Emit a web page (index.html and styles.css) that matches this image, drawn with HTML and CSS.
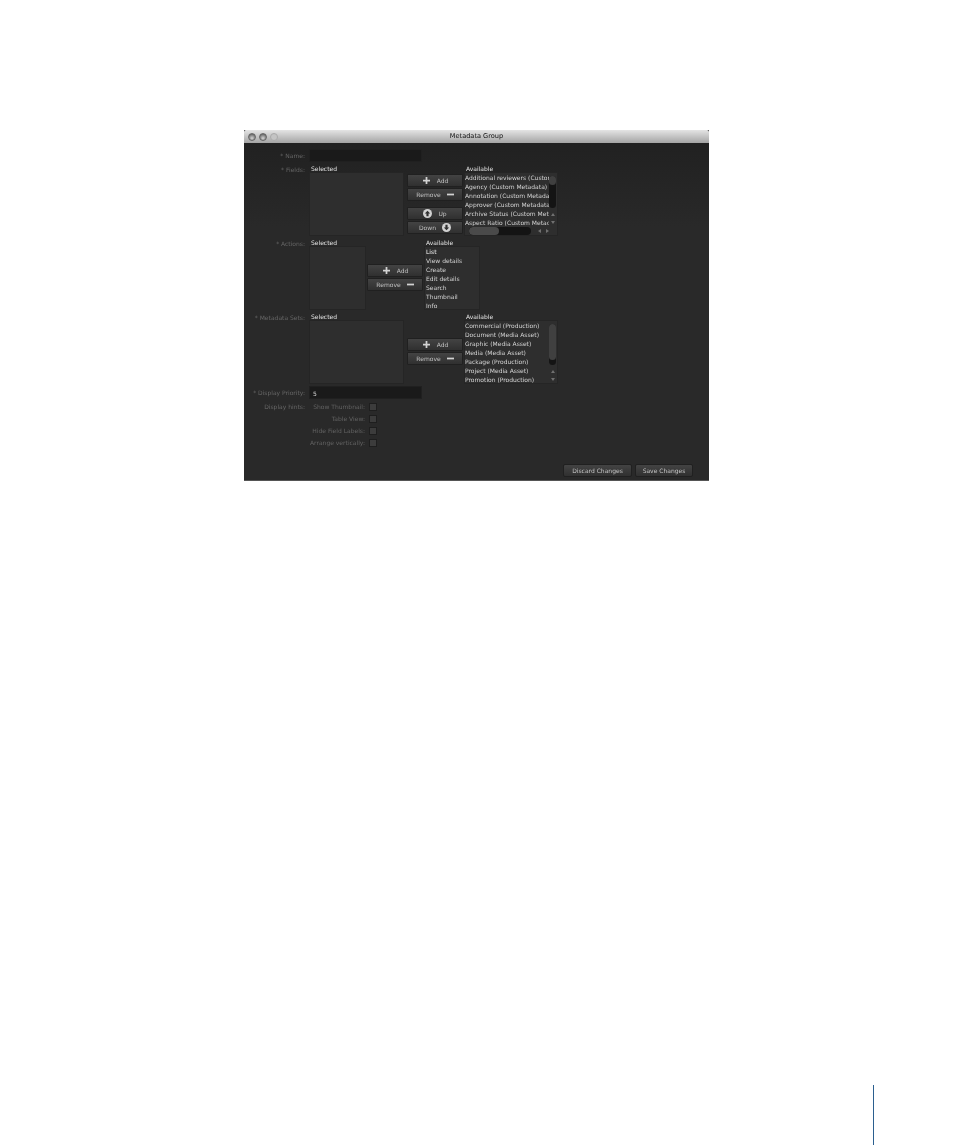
FILE: index.html
```html
<!DOCTYPE html>
<html lang="en">
<head>
<meta charset="utf-8">
<title>Metadata Group</title>
<link rel="stylesheet" href="styles.css">
</head>
<body>
<main class="page">
  <section class="window">
    <header class="titlebar">
      <div class="lights">
        <span class="light"></span><span class="light"></span><span class="light light-off"></span>
      </div>
      <div class="title">Metadata Group</div>
    </header>
    <div class="content">
      <div class="row row-name">
        <div class="label">* Name:</div>
        <div class="input"></div>
      </div>

      <div class="row row-picker">
        <div class="label">* Fields:</div>
        <div class="col col-selected">
          <div class="cap">Selected</div>
          <div class="box box-wide"></div>
        </div>
        <div class="buttons buttons-fields">
          <div class="btn btn-add"><svg class="ico" viewBox="0 0 8 8"><path d="M3 0h2v3h3v2H5v3H3V5H0V3h3z"/></svg><span>Add</span></div>
          <div class="btn"><span>Remove</span><svg class="ico" viewBox="0 0 8 8"><path d="M0 3h8v2H0z"/></svg></div>
          <div class="btn btn-gap"><svg class="ico ico-round" viewBox="0 0 10 10"><circle cx="5" cy="5" r="5"/><path class="arrow" d="M5 2 8 5H6.200V8H3.800V5H2z"/></svg><span>Up</span></div>
          <div class="btn"><span>Down</span><svg class="ico ico-round" viewBox="0 0 10 10"><circle cx="5" cy="5" r="5"/><path class="arrow" d="M5 8 2 5H3.800V2H6.200V5H8z"/></svg></div>
        </div>
        <div class="col col-available">
          <div class="cap">Available</div>
          <div class="box avail">
            <div class="avail-main">
              <div class="items">
                <div>Additional reviewers (Custom Metadata)</div>
                <div>Agency (Custom Metadata)</div>
                <div>Annotation (Custom Metadata)</div>
                <div>Approver (Custom Metadata)</div>
                <div>Archive Status (Custom Metadata)</div>
                <div>Aspect Ratio (Custom Metadata)</div>
              </div>
              <div class="vbar"><div class="track"><div class="thumb thumb-short"></div></div><div class="arrows"><i class="up"></i><i class="down"></i></div></div>
            </div>
            <div class="hbar"><div class="htrack"><div class="hthumb"></div></div><i class="left"></i><i class="right"></i></div>
          </div>
        </div>
      </div>

      <div class="row row-picker">
        <div class="label">* Actions:</div>
        <div class="col col-selected">
          <div class="cap">Selected</div>
          <div class="box box-narrow"></div>
        </div>
        <div class="buttons buttons-two buttons-near">
          <div class="btn btn-add"><svg class="ico" viewBox="0 0 8 8"><path d="M3 0h2v3h3v2H5v3H3V5H0V3h3z"/></svg><span>Add</span></div>
          <div class="btn"><span>Remove</span><svg class="ico" viewBox="0 0 8 8"><path d="M0 3h8v2H0z"/></svg></div>
        </div>
        <div class="col col-actions">
          <div class="cap">Available</div>
          <div class="box items-plain">
            <div class="first">List</div>
            <div>View details</div>
            <div>Create</div>
            <div>Edit details</div>
            <div>Search</div>
            <div>Thumbnail</div>
            <div>Info</div>
          </div>
        </div>
      </div>

      <div class="row row-picker">
        <div class="label">* Metadata Sets:</div>
        <div class="col col-selected">
          <div class="cap">Selected</div>
          <div class="box box-wide"></div>
        </div>
        <div class="buttons buttons-two">
          <div class="btn btn-add"><svg class="ico" viewBox="0 0 8 8"><path d="M3 0h2v3h3v2H5v3H3V5H0V3h3z"/></svg><span>Add</span></div>
          <div class="btn"><span>Remove</span><svg class="ico" viewBox="0 0 8 8"><path d="M0 3h8v2H0z"/></svg></div>
        </div>
        <div class="col col-available">
          <div class="cap">Available</div>
          <div class="box avail avail-sets">
            <div class="items">
              <div>Commercial (Production)</div>
              <div>Document (Media Asset)</div>
              <div>Graphic (Media Asset)</div>
              <div>Media (Media Asset)</div>
              <div>Package (Production)</div>
              <div>Project (Media Asset)</div>
              <div>Promotion (Production)</div>
            </div>
            <div class="vbar"><div class="track track-sets"><div class="thumb thumb-long"></div></div><div class="arrows"><i class="up"></i><i class="down"></i></div></div>
          </div>
        </div>
      </div>

      <div class="row row-priority">
        <div class="label">* Display Priority:</div>
        <div class="input input-value">5</div>
      </div>

      <div class="row row-hints">
        <div class="label">Display hints:</div>
        <div class="hints">
          <div class="hint"><span>Show Thumbnail:</span><i class="check"></i></div>
          <div class="hint"><span>Table View:</span><i class="check"></i></div>
          <div class="hint"><span>Hide Field Labels:</span><i class="check"></i></div>
          <div class="hint"><span>Arrange vertically:</span><i class="check"></i></div>
        </div>
      </div>

      <footer class="footer">
        <div class="btn btn-foot btn-discard">Discard Changes</div>
        <div class="btn btn-foot btn-save">Save Changes</div>
      </footer>
    </div>
  </section>
  <div class="page-rule"></div>
</main>
</body>
</html>
```

FILE: styles.css
```css
* { box-sizing: border-box; }

html, body {
  margin: 0;
  padding: 0;
  background: #fff;
}

.page {
  position: relative;
  width: 954px;
  height: 1145px;
  padding: 130px 0 0 244px;
  overflow: hidden;
  font-family: "DejaVu Sans", sans-serif;
  font-size: 6px;
  line-height: 9px;
}

.page-rule {
  position: absolute;
  left: 873px;
  top: 1085px;
  width: 1px;
  height: 60px;
  background: #2b5f8f;
}

.window {
  width: 465px;
  height: 351px;
  background: #272727;
  display: flex;
  flex-direction: column;
  border-bottom: 1px solid #555;
  filter: blur(0.25px);
}

.titlebar {
  height: 13px;
  flex: none;
  display: flex;
  align-items: center;
  position: relative;
  background: linear-gradient(#e4e4e4, #a4a4a4);
  border-radius: 2px 2px 0 0;
}

.lights {
  display: flex;
  gap: 3px;
  padding-left: 4px;
}

.light {
  width: 8px;
  height: 8px;
  border-radius: 50%;
  background: radial-gradient(circle at 50% 70%, #d4d4d4, #6d6d6d 75%);
  border: 1px solid #666;
}

.light-off {
  background: #c4c4c4;
  border-color: #aaa;
}

.title {
  position: absolute;
  left: 0;
  right: 0;
  text-align: center;
  color: #111;
  font-size: 6.6px;
}

.content {
  flex: 1;
  display: flex;
  flex-direction: column;
  padding-top: 6px;
  background: linear-gradient(#212121, #292929 25%);
}

.row { display: flex; }

.label {
  width: 61px;
  flex: none;
  text-align: right;
  color: #666;
  white-space: nowrap;
}

.row-name { height: 13px; align-items: center; margin-bottom: 3px; }
.row-picker { height: 71px; margin-bottom: 3px; }
.row-priority { height: 13px; margin-top: -1px; align-items: center; }
.row-hints { margin-top: 3px; }

.input {
  width: 113px;
  height: 13px;
  margin-left: 4px;
  background: #1a1a1a;
  border: 1px solid #202020;
}

.input-value {
  color: #d8d8d8;
  padding-left: 3px;
  line-height: 13px;
}

.col {
  display: flex;
  flex-direction: column;
  flex: none;
}

.col-selected { margin-left: 4px; }

.cap {
  height: 7px;
  line-height: 8px;
  color: #e4e4e4;
  padding-left: 2px;
  white-space: nowrap;
}

.box {
  height: 64px;
  background: #2e2e2e;
  border: 1px solid #252525;
}

.box-wide { width: 95px; }
.box-narrow { width: 57px; }

.buttons {
  width: 56px;
  flex: none;
  display: flex;
  flex-direction: column;
  gap: 1px;
}

.buttons-fields { margin: 9px 1px 0 3px; }
.buttons-two { margin: 25px 1px 0 3px; }
.buttons-near { margin-left: 1px; }

.btn {
  height: 13px;
  display: flex;
  align-items: center;
  justify-content: center;
  gap: 6px;
  color: #c0c0c0;
  background: linear-gradient(#434343, #303030);
  border: 1px solid #202020;
  border-radius: 1px;
  white-space: nowrap;
}

.btn-add { gap: 7px; padding-left: 1px; }
.btn-gap { margin-top: 5px; }

.ico {
  width: 7px;
  height: 7px;
  fill: #d2d2d2;
  flex: none;
}

.ico-round { width: 9px; height: 9px; }
.ico-round .arrow { fill: #2f2f2f; }

.col-available { width: 94px; }
.col-actions { width: 57px; }

.avail {
  width: 94px;
  display: flex;
  flex-direction: column;
  overflow: hidden;
}

.avail-sets { flex-direction: row; }

.avail-main {
  display: flex;
  height: 53px;
}

.items {
  flex: 1;
  min-width: 0;
  overflow: hidden;
  color: #d4d4d4;
  white-space: nowrap;
}

.items > div { height: 9px; line-height: 9px; }

.items-plain {
  width: 56px;
  color: #d4d4d4;
  padding-left: 1px;
}

.items-plain > div { height: 9px; line-height: 9px; white-space: nowrap; }
.items-plain .first { color: #f4f4f4; }

.vbar {
  width: 8px;
  flex: none;
  display: flex;
  flex-direction: column;
  padding: 3px 1px 0 0;
  justify-content: space-between;
}

.track {
  height: 32px;
  background: #141414;
  border-radius: 4px;
}

.track-sets { height: 41px; }

.thumb {
  background: #404040;
  border-radius: 4px;
}

.thumb-short { height: 9px; }
.thumb-long { height: 36px; }

.arrows {
  display: flex;
  flex-direction: column;
  align-items: center;
  gap: 5px;
  padding-bottom: 2px;
}

.up, .down, .left, .right {
  display: block;
  width: 0;
  height: 0;
  border: 2px solid transparent;
}

.up { border-top: 0; border-bottom: 3px solid #707070; }
.down { border-bottom: 0; border-top: 3px solid #707070; }
.left { border-left: 0; border-right: 3px solid #707070; }
.right { border-right: 0; border-left: 3px solid #707070; }

.hbar {
  height: 9px;
  flex: none;
  display: flex;
  align-items: center;
  gap: 5px;
  padding: 0 4px;
}

.htrack {
  width: 62px;
  height: 8px;
  margin-right: 2px;
  background: #141414;
  border-radius: 4px;
  overflow: hidden;
}

.hthumb {
  width: 30px;
  height: 8px;
  background: #4a4a4a;
  border-radius: 4px;
}

.hints {
  display: flex;
  flex-direction: column;
  gap: 3px;
  width: 72px;
}

.hint {
  height: 9px;
  display: flex;
  justify-content: flex-end;
  align-items: center;
  gap: 4px;
  color: #626262;
  white-space: nowrap;
}

.check {
  display: block;
  width: 8px;
  height: 8px;
  flex: none;
  background: #3c3c3c;
  border: 1px solid #1e1e1e;
}

.footer {
  margin-top: auto;
  display: flex;
  justify-content: flex-end;
  gap: 3px;
  padding: 0 16px 3px 0;
}

.btn-foot { height: 13px; color: #c4c4c4; border-radius: 2px; }
.btn-discard { width: 69px; }
.btn-save { width: 58px; }
```
